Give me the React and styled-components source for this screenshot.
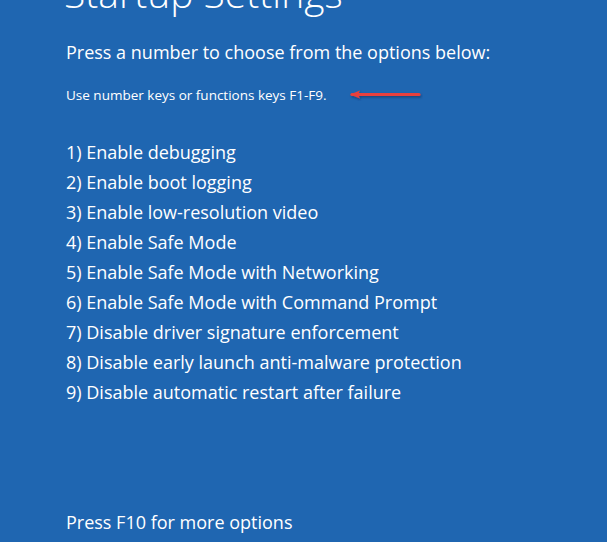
import React from 'react';
import styled, { createGlobalStyle } from 'styled-components';

const GlobalStyle = createGlobalStyle`
  html, body {
    margin: 0;
    padding: 0;
    background: #1f66b1;
  }
  body {
    font-family: "Open Sans", "Noto Sans", sans-serif;
    color: #ffffff;
  }
`;

const Screen = styled.div`
  width: 607px;
  height: 542px;
  overflow: hidden;
  background: #1f66b1;
  display: flex;
  flex-direction: column;
  padding-left: 66px;
  box-sizing: border-box;
`;

const Title = styled.h1`
  margin: -34px 0 0 -2px;
  font-size: 39px;
  font-weight: 300;
  line-height: 54px;
  white-space: nowrap;
`;

const Prompt = styled.p`
  margin: 20px 0 0 0;
  font-size: 18px;
  font-weight: 400;
  line-height: 24px;
`;

const HintRow = styled.div`
  display: flex;
  align-items: center;
  gap: 22px;
  margin-top: 21px;
  height: 20px;
`;

const Hint = styled.span`
  font-size: 13.5px;
  line-height: 20px;
`;

const List = styled.ol`
  list-style: none;
  margin: 32px 0 0 0;
  padding: 0;
  display: flex;
  flex-direction: column;
`;

const Item = styled.li`
  font-size: 18px;
  line-height: 30px;
  white-space: nowrap;
`;

const Footer = styled.p`
  margin: auto 0 8px 0;
  font-size: 18px;
  line-height: 24px;
`;

const Arrow = () => (
  <svg width="74" height="12" viewBox="0 0 74 12">
    <defs>
      <filter id="sh" x="-10%" y="-50%" width="120%" height="200%">
        <feDropShadow dx="1" dy="1.5" stdDeviation="1" floodColor="#0a2a55" floodOpacity="0.6" />
      </filter>
    </defs>
    <g filter="url(#sh)">
      <path d="M3 5.5 L70 5.5" stroke="#e8413c" strokeWidth="3" strokeLinecap="round" />
      <path d="M1 5.5 L11 1.5 L9 5.5 L11 9.5 Z" fill="#e8413c" />
    </g>
  </svg>
);

const options = [
  '1) Enable debugging',
  '2) Enable boot logging',
  '3) Enable low-resolution video',
  '4) Enable Safe Mode',
  '5) Enable Safe Mode with Networking',
  '6) Enable Safe Mode with Command Prompt',
  '7) Disable driver signature enforcement',
  '8) Disable early launch anti-malware protection',
  '9) Disable automatic restart after failure',
];

export default function App() {
  return (
    <>
      <GlobalStyle />
      <Screen>
        <Title>Startup Settings</Title>
        <Prompt>Press a number to choose from the options below:</Prompt>
        <HintRow>
          <Hint>Use number keys or functions keys F1-F9.</Hint>
          <Arrow />
        </HintRow>
        <List>
          {options.map((o) => (
            <Item key={o}>{o}</Item>
          ))}
        </List>
        <Footer>Press F10 for more options</Footer>
      </Screen>
    </>
  );
}
